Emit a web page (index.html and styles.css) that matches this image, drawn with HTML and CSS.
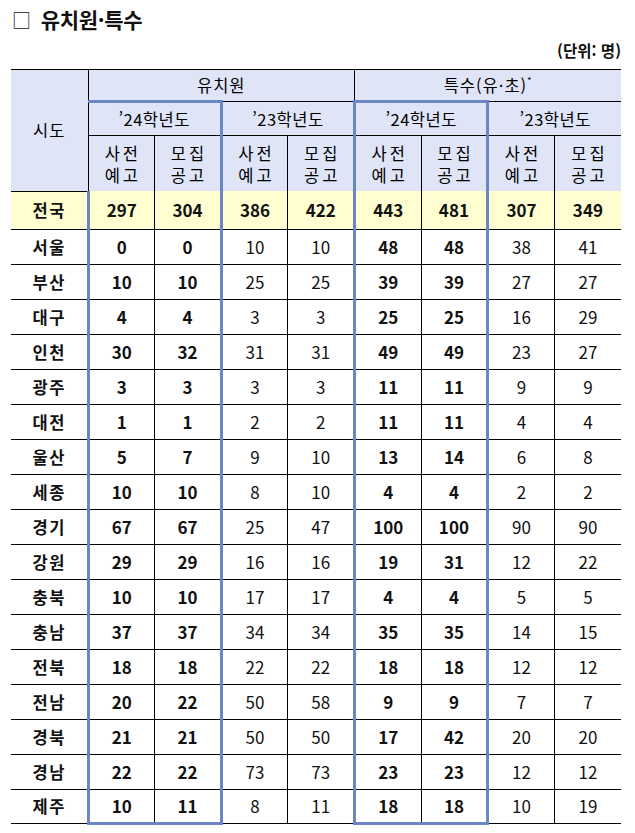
FILE: index.html
```html
<!DOCTYPE html>
<html lang="ko">
<head>
<meta charset="utf-8">
<link rel="stylesheet" href="styles.css">
</head>
<body>
<div class="page">
  <h1 class="title"><span class="box">□</span>유치원·특수</h1>
  <div class="unit">(단위: 명)</div>
  <table class="grid">
    <colgroup>
      <col class="c-region">
      <col class="c-num"><col class="c-num"><col class="c-num"><col class="c-num">
      <col class="c-num"><col class="c-num"><col class="c-num"><col class="c-num">
    </colgroup>
    <thead>
      <tr class="h1">
        <th rowspan="3" class="region-h">시도</th>
        <th colspan="4">유치원</th>
        <th colspan="4">특수(유·초)<sup>*</sup></th>
      </tr>
      <tr class="h2">
        <th colspan="2" class="hl-top">’24학년도</th>
        <th colspan="2">’23학년도</th>
        <th colspan="2" class="hl-top">’24학년도</th>
        <th colspan="2">’23학년도</th>
      </tr>
      <tr class="h3">
        <th class="hl-l">사전<br>예고</th><th class="hl-r">모집<br>공고</th>
        <th>사전<br>예고</th><th>모집<br>공고</th>
        <th class="hl-l">사전<br>예고</th><th class="hl-r">모집<br>공고</th>
        <th>사전<br>예고</th><th>모집<br>공고</th>
      </tr>
    </thead>
    <tbody>
      <tr class="total"><td class="rg">전국</td><td class="hl-l">297</td><td class="hl-r">304</td><td>386</td><td>422</td><td class="hl-l">443</td><td class="hl-r">481</td><td>307</td><td>349</td></tr>
      <tr><td class="rg">서울</td><td class="hl-l b">0</td><td class="hl-r b">0</td><td>10</td><td>10</td><td class="hl-l b">48</td><td class="hl-r b">48</td><td>38</td><td>41</td></tr>
      <tr><td class="rg">부산</td><td class="hl-l b">10</td><td class="hl-r b">10</td><td>25</td><td>25</td><td class="hl-l b">39</td><td class="hl-r b">39</td><td>27</td><td>27</td></tr>
      <tr><td class="rg">대구</td><td class="hl-l b">4</td><td class="hl-r b">4</td><td>3</td><td>3</td><td class="hl-l b">25</td><td class="hl-r b">25</td><td>16</td><td>29</td></tr>
      <tr><td class="rg">인천</td><td class="hl-l b">30</td><td class="hl-r b">32</td><td>31</td><td>31</td><td class="hl-l b">49</td><td class="hl-r b">49</td><td>23</td><td>27</td></tr>
      <tr><td class="rg">광주</td><td class="hl-l b">3</td><td class="hl-r b">3</td><td>3</td><td>3</td><td class="hl-l b">11</td><td class="hl-r b">11</td><td>9</td><td>9</td></tr>
      <tr><td class="rg">대전</td><td class="hl-l b">1</td><td class="hl-r b">1</td><td>2</td><td>2</td><td class="hl-l b">11</td><td class="hl-r b">11</td><td>4</td><td>4</td></tr>
      <tr><td class="rg">울산</td><td class="hl-l b">5</td><td class="hl-r b">7</td><td>9</td><td>10</td><td class="hl-l b">13</td><td class="hl-r b">14</td><td>6</td><td>8</td></tr>
      <tr><td class="rg">세종</td><td class="hl-l b">10</td><td class="hl-r b">10</td><td>8</td><td>10</td><td class="hl-l b">4</td><td class="hl-r b">4</td><td>2</td><td>2</td></tr>
      <tr><td class="rg">경기</td><td class="hl-l b">67</td><td class="hl-r b">67</td><td>25</td><td>47</td><td class="hl-l b">100</td><td class="hl-r b">100</td><td>90</td><td>90</td></tr>
      <tr><td class="rg">강원</td><td class="hl-l b">29</td><td class="hl-r b">29</td><td>16</td><td>16</td><td class="hl-l b">19</td><td class="hl-r b">31</td><td>12</td><td>22</td></tr>
      <tr><td class="rg">충북</td><td class="hl-l b">10</td><td class="hl-r b">10</td><td>17</td><td>17</td><td class="hl-l b">4</td><td class="hl-r b">4</td><td>5</td><td>5</td></tr>
      <tr><td class="rg">충남</td><td class="hl-l b">37</td><td class="hl-r b">37</td><td>34</td><td>34</td><td class="hl-l b">35</td><td class="hl-r b">35</td><td>14</td><td>15</td></tr>
      <tr><td class="rg">전북</td><td class="hl-l b">18</td><td class="hl-r b">18</td><td>22</td><td>22</td><td class="hl-l b">18</td><td class="hl-r b">18</td><td>12</td><td>12</td></tr>
      <tr><td class="rg">전남</td><td class="hl-l b">20</td><td class="hl-r b">22</td><td>50</td><td>58</td><td class="hl-l b">9</td><td class="hl-r b">9</td><td>7</td><td>7</td></tr>
      <tr><td class="rg">경북</td><td class="hl-l b">21</td><td class="hl-r b">21</td><td>50</td><td>50</td><td class="hl-l b">17</td><td class="hl-r b">42</td><td>20</td><td>20</td></tr>
      <tr><td class="rg">경남</td><td class="hl-l b">22</td><td class="hl-r b">22</td><td>73</td><td>73</td><td class="hl-l b">23</td><td class="hl-r b">23</td><td>12</td><td>12</td></tr>
      <tr class="last"><td class="rg">제주</td><td class="hl-l b">10</td><td class="hl-r b">11</td><td>8</td><td>11</td><td class="hl-l b">18</td><td class="hl-r b">18</td><td>10</td><td>19</td></tr>
    </tbody>
  </table>
</div>
</body>
</html>
```

FILE: styles.css
```css
html, body {
  margin: 0;
  padding: 0;
  background: #ffffff;
}

body {
  font-family: "Noto Sans CJK KR", "Noto Sans", sans-serif;
  color: #111;
}

.page {
  padding: 5px 14px 0 11px;
}

.title {
  margin: 0;
  font-size: 21px;
  font-weight: 700;
  line-height: 29px;
  letter-spacing: -0.3px;
}

.title .box {
  font-weight: 400;
  font-size: 19px;
  margin-right: 10px;
  margin-left: 1px;
}

.unit {
  text-align: right;
  font-size: 15.5px;
  font-weight: 700;
  line-height: 22px;
  margin-top: 5px;
  padding-right: 0;
}

.grid {
  width: 610px;
  margin-top: 8px;
  border-collapse: collapse;
  table-layout: fixed;
  text-align: center;
}

.c-region { width: 77px; }
.c-num { width: 66.6px; }

.grid th, .grid td {
  border: 1px solid #000;
  padding: 0;
  vertical-align: middle;
}

.grid tr > :first-child { border-left: none; }
.grid tr > :last-child { border-right: none; }
.grid thead tr.h1 > th:last-child { border-right: none; }

.grid thead th {
  background: #dfe5f7;
  font-weight: 400;
  font-size: 16.5px;
  color: #000;
}

.grid thead tr.h1 th { border-top: 1px solid #000; }

.region-h {
  border-right: 1px solid #000;
  letter-spacing: 3px;
}

.h1 th { height: 30px; letter-spacing: 1px; }
.h1 sup { font-size: 9px; vertical-align: 8px; line-height: 0; }

.h2 th { height: 32px; letter-spacing: 0.5px; }

.h3 th {
  height: 55px;
  line-height: 22px;
  letter-spacing: 3px;
  padding-left: 3px;
}

.grid thead tr.h3 th { border-bottom: none; }

.grid tbody td {
  height: 34px;
  font-size: 17px;
  line-height: 20px;
  font-weight: 400;
}

.grid tbody td.rg {
  font-weight: 700;
  font-size: 16.5px;
  letter-spacing: 1.5px;
  padding-left: 1px;
}

.grid tbody td.b { font-weight: 700; }

.grid tbody tr.total td {
  background: #fefed0;
  font-weight: 700;
  height: 37px;
  border-top: none;
}

.grid tbody tr.last td { height: 32px; border-bottom: 1px solid #000; }

.grid .hl-top { border-top: 3px solid #6b86c6; border-left: 3px solid #6b86c6; border-right: 3px solid #6b86c6; }
.grid .hl-l { border-left: 3px solid #6b86c6; }
.grid .hl-r { border-right: 3px solid #6b86c6; }
.grid tbody tr.last td.hl-l,
.grid tbody tr.last td.hl-r { border-bottom: 3px solid #6b86c6; }
```
